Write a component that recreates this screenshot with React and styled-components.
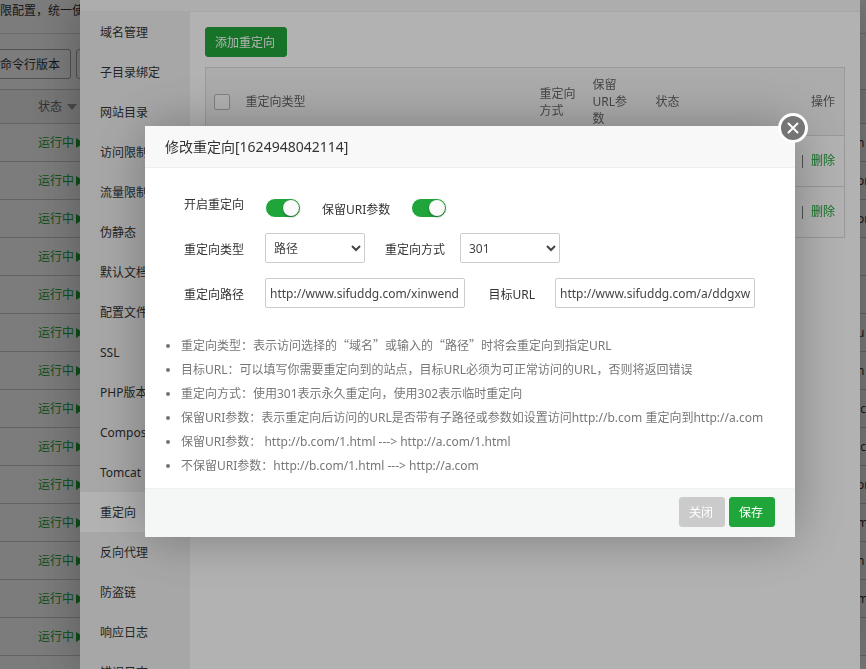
import { useState } from 'react'
import styled, { createGlobalStyle } from 'styled-components'

const menu = [
  '域名管理', '子目录绑定', '网站目录', '访问限制', '流量限制', '伪静态',
  '默认文档', '配置文件', 'SSL', 'PHP版本', 'Composer', 'Tomcat', '重定向',
  '反向代理', '防盗链', '响应日志', '错误日志',
]

const siteNotes = ['n', 'or', 'or', '', '', 'u', 'n', '.c', '.c', 'or', 'm', 'n', 'm', '']

const tips = [
  <>重定向类型：表示访问选择的<Quoted>“域名”</Quoted>或输入的<Quoted>“路径”</Quoted>时将会重定向到指定URL</>,
  '目标URL：可以填写你需要重定向到的站点，目标URL必须为可正常访问的URL，否则将返回错误',
  '重定向方式：使用301表示永久重定向，使用302表示临时重定向',
  '保留URI参数：表示重定向后访问的URL是否带有子路径或参数如设置访问http://b.com 重定向到http://a.com',
  '保留URI参数： http://b.com/1.html ---> http://a.com/1.html',
  '不保留URI参数：http://b.com/1.html ---> http://a.com',
]

function Quoted({ children }) {
  return <QuotedText lang="zh-CN">{children}</QuotedText>
}

const SitePage = () => (
  <Page>
    <Notice>限配置，统一使</Notice>
    <Toolbar>
      <CliButton type="button">命令行版本</CliButton>
      <NextButton type="button" aria-label="更多" />
    </Toolbar>
    <SiteTable>
      <thead>
        <tr>
          <StatusHead>状态<SortArrow viewBox="0 0 10 6"><path d="M0 0h10L5 6z" /></SortArrow></StatusHead>
          <NoteHead />
        </tr>
      </thead>
      <tbody>
        {siteNotes.map((note, i) => (
          <tr key={i}>
            <StatusCell>
              <RunLink href="#">
                运行中<PlayIcon viewBox="0 0 8 10"><path d="M0 0l8 5-8 5z" /></PlayIcon>
              </RunLink>
            </StatusCell>
            <NoteCell>{note}</NoteCell>
          </tr>
        ))}
      </tbody>
    </SiteTable>
  </Page>
)

const SiteDialog = () => (
  <SiteWindow>
    <SiteTitle />
    <SiteBody>
      <Sidebar>
        {menu.map((name) => (
          <MenuItem key={name} href="#" $active={name === '重定向'}>{name}</MenuItem>
        ))}
      </Sidebar>
      <Content>
        <Button type="button">添加重定向</Button>
        <RuleTable>
          <colgroup>
            <col width="31" />
            <col />
            <col width="53" />
            <col width="63" />
            <col width="70" />
            <col width="128" />
          </colgroup>
          <thead>
            <tr>
              <CheckHead><Checkbox type="checkbox" aria-label="全选" /></CheckHead>
              <th>重定向类型</th>
              <th>重定向方式</th>
              <th>保留URL参数</th>
              <th>状态</th>
              <ActionHead>操作</ActionHead>
            </tr>
          </thead>
          <tbody>
            {[1, 2].map((id) => (
              <tr key={id}>
                <td colSpan={5} />
                <ActionCell><Divider>|</Divider><a href="#">删除</a></ActionCell>
              </tr>
            ))}
          </tbody>
        </RuleTable>
      </Content>
    </SiteBody>
  </SiteWindow>
)

const RedirectDialog = () => {
  const [open, setOpen] = useState(true)
  const [keepUri, setKeepUri] = useState(true)
  const [path, setPath] = useState('http://www.sifuddg.com/xinwend')
  const [target, setTarget] = useState('http://www.sifuddg.com/a/ddgxw')

  return (
    <Dialog role="dialog" aria-labelledby="redirect-title">
      <DialogTitle id="redirect-title">修改重定向[1624948042114]</DialogTitle>
      <CloseButton type="button" aria-label="关闭">
        <svg width="12" height="12" viewBox="0 0 12 12">
          <path d="M1.5 1.5l9 9M10.5 1.5l-9 9" stroke="#fff" strokeWidth="2" strokeLinecap="round" />
        </svg>
      </CloseButton>
      <Form>
        <SwitchLine>
          <Label htmlFor="open">开启重定向</Label>
          <SwitchGroup>
            <Switch id="open" type="checkbox" checked={open} onChange={(e) => setOpen(e.target.checked)} />
            <SwitchLabel htmlFor="keep">保留URI参数</SwitchLabel>
            <Switch id="keep" type="checkbox" checked={keepUri} onChange={(e) => setKeepUri(e.target.checked)} />
          </SwitchGroup>
        </SwitchLine>
        <Line>
          <Label htmlFor="type">重定向类型</Label>
          <Select id="type" defaultValue="path">
            <option value="domain">域名</option>
            <option value="path">路径</option>
          </Select>
          <InnerLabel htmlFor="method" $width={95} $gap={15}>重定向方式</InnerLabel>
          <Select id="method" defaultValue="301">
            <option>301</option>
            <option>302</option>
          </Select>
        </Line>
        <Line>
          <Label htmlFor="path">重定向路径</Label>
          <Input id="path" value={path} onChange={(e) => setPath(e.target.value)} />
          <InnerLabel htmlFor="target" $width={90} $gap={20}>目标URL</InnerLabel>
          <Input id="target" value={target} onChange={(e) => setTarget(e.target.value)} />
        </Line>
      </Form>
      <Tips>
        {tips.map((tip, i) => <li key={i}>{tip}</li>)}
      </Tips>
      <Footer>
        <Button type="button" $muted>关闭</Button>
        <Button type="button">保存</Button>
      </Footer>
    </Dialog>
  )
}

const App = () => (
  <>
    <GlobalStyle />
    <SitePage />
    <Shade>
      <SiteDialog />
    </Shade>
    <Shade $top={126}>
      <RedirectDialog />
    </Shade>
  </>
)

export default App

const GlobalStyle = createGlobalStyle`
  * {
    box-sizing: border-box;
  }
  body {
    margin: 0;
    overflow: hidden;
    background: #fff;
    color: #333;
    font-family: "Noto Sans", "Noto Sans CJK SC", sans-serif;
    font-size: 12px;
    line-height: 18px;
  }
  button, input, select {
    font: inherit;
    color: inherit;
  }
  a {
    text-decoration: none;
  }
`

const Page = styled.div`
  height: 100vh;
  overflow: hidden;
`

const Notice = styled.div`
  height: 34px;
  padding-top: 2px;
  border-bottom: 1px solid #ddd;
`

const Toolbar = styled.div`
  display: flex;
  gap: 5px;
  padding: 15px 0 10px;
`

const CliButton = styled.button`
  height: 30px;
  padding: 2px 10px 0 0;
  border: 1px solid #aaa;
  border-left: 0;
  border-radius: 0 3px 3px 0;
  background: transparent;
`

const NextButton = styled.button`
  width: 60px;
  height: 30px;
  border: 1px solid #aaa;
  border-radius: 3px;
  background: transparent;
`

const SiteTable = styled.table`
  width: 100%;
  table-layout: fixed;
  border-collapse: collapse;
  border-top: 1px solid #ccc;

  th, td {
    height: 38px;
    border-bottom: 1px solid #ccc;
    font-weight: 400;
    text-align: left;
    white-space: nowrap;
    overflow: hidden;
  }
  th {
    height: 34px;
    background: #f6f6f6;
    color: #666;
  }
`

const StatusHead = styled.th`
  padding: 0 0 0 38px;
`

const NoteHead = styled.th`
  width: 6px;
  padding: 0;
`

const StatusCell = styled.td`
  padding: 0 0 0 38px;
`

const NoteCell = styled.td`
  padding: 0;
  text-indent: -3px;
`

const SortArrow = styled.svg`
  width: 10px;
  height: 6px;
  margin-left: 5px;
  vertical-align: middle;
  fill: #999;
`

const RunLink = styled.a`
  color: #20a53a;
`

const PlayIcon = styled.svg`
  width: 8px;
  height: 10px;
  margin-left: 2px;
  vertical-align: middle;
  fill: currentColor;
`

const Shade = styled.div`
  position: fixed;
  inset: 0;
  display: flex;
  justify-content: center;
  align-items: flex-start;
  padding: ${({ $top = 0 }) => $top}px 6px 0 80px;
  background: rgba(0, 0, 0, 0.3);
`

const SiteWindow = styled.div`
  display: flex;
  flex: 1;
  flex-direction: column;
  height: 100%;
  background: #fff;
  box-shadow: 1px 1px 50px rgba(0, 0, 0, 0.3);
`

const SiteTitle = styled.div`
  flex: none;
  height: 12px;
  border-bottom: 1px solid #eee;
  background: #f8f8f8;
`

const SiteBody = styled.div`
  display: flex;
  flex: 1;
  min-height: 0;
`

const Sidebar = styled.nav`
  flex: none;
  width: 110px;
  background: #f0f0f1;
  overflow: hidden;
`

const MenuItem = styled.a`
  display: block;
  height: 40px;
  padding-left: 20px;
  line-height: 42px;
  background: ${({ $active }) => ($active ? '#fff' : 'transparent')};
  color: #333;
`

const Content = styled.div`
  flex: 1;
  padding: 15px 15px 0;
`

const Button = styled.button`
  display: block;
  height: 30px;
  padding: 2px 11px 0 9px;
  border: 1px solid ${({ $muted }) => ($muted ? '#cbcbcb' : '#20a53a')};
  border-radius: 3px;
  background: ${({ $muted }) => ($muted ? '#cbcbcb' : '#20a53a')};
  color: #fff;
`

const RuleTable = styled.table`
  width: 100%;
  margin-top: 10px;
  table-layout: fixed;
  border-collapse: collapse;
  border: 1px solid #ddd;

  th {
    height: 68px;
    padding: 0 8px 0 9px;
    background: #f6f6f6;
    color: #666;
    font-weight: 400;
    line-height: 17px;
    text-align: left;
  }
  td {
    height: 51px;
    padding: 0 9px;
    border-top: 1px solid #ddd;
  }
  a {
    color: #20a53a;
  }
`

const CheckHead = styled.th`
  &&& {
    padding: 0 0 0 8px;
  }
`

const ActionHead = styled.th`
  &&& {
    padding-right: 9px;
    text-align: right;
  }
`

const ActionCell = styled.td`
  text-align: right;
`

const Checkbox = styled.input`
  display: block;
  width: 16px;
  height: 16px;
  margin: 0;
  appearance: none;
  border: 1px solid #bbb;
  border-radius: 2px;
  background: #fff;
`

const Divider = styled.span`
  margin-right: 5px;
  color: #666;
`

const Dialog = styled.div`
  position: relative;
  width: 650px;
  background: #fff;
  box-shadow: 1px 1px 50px rgba(0, 0, 0, 0.3);
`

const DialogTitle = styled.h2`
  height: 42px;
  margin: 0;
  padding-left: 20px;
  border-bottom: 1px solid #eee;
  background: #f8f8f8;
  font-size: 14px;
  font-weight: 400;
  line-height: 42px;
`

const CloseButton = styled.button`
  position: absolute;
  top: -13px;
  right: -13px;
  display: flex;
  align-items: center;
  justify-content: center;
  width: 30px;
  height: 30px;
  padding: 0;
  border: 3px solid #fff;
  border-radius: 50%;
  background: #757575;
`

const Form = styled.div`
  display: flex;
  flex-direction: column;
  gap: 15px;
  padding: 20px 0 26px;
`

const Line = styled.div`
  display: flex;
  align-items: center;
  height: 30px;
`

const Label = styled.label`
  width: 120px;
  padding: 4px 21px 0 0;
  line-height: 32px;
  text-align: right;
`

const InnerLabel = styled(Label)`
  width: ${({ $width }) => $width}px;
  padding-right: ${({ $gap }) => $gap}px;
`

const SwitchLine = styled(Line)`
  align-items: flex-start;

  & > label {
    padding-top: 1px;
  }
`

const SwitchGroup = styled.div`
  display: flex;
  align-items: center;
  height: 40px;
`

const SwitchLabel = styled.label`
  margin: 0 21px;
  padding-top: 4px;
`

const Switch = styled.input`
  display: flex;
  width: 36px;
  height: 20px;
  margin: 0;
  padding: 1px;
  appearance: none;
  border: 1px solid #fff;
  border-radius: 10px;
  background: #ddd;

  &::before {
    content: "";
    width: 16px;
    height: 16px;
    border-radius: 50%;
    background: #fafafa;
    box-shadow: 0 1px 2px rgba(0, 0, 0, 0.4);
  }
  &:checked {
    justify-content: flex-end;
    background: #20a53a;
  }
`

const Select = styled.select`
  width: 100px;
  height: 30px;
  padding: 0 0 0 4px;
  border: 1px solid #ccc;
  border-radius: 2px;
  background: #fff;
  color: #444;
`

const Input = styled.input`
  width: 200px;
  height: 30px;
  padding: 0 2px 0 4px;
  border: 1px solid #ccc;
  border-radius: 2px;
  background: #fff;
  color: #444;
`

const Tips = styled.ul`
  margin: 0;
  padding: 0 0 10px 36px;
  color: #777;
  line-height: 24px;
`

const QuotedText = styled.span`
  font-family: "Noto Sans CJK SC", sans-serif;
  line-height: 1;
`

const Footer = styled.div`
  display: flex;
  justify-content: flex-end;
  gap: 4px;
  padding: 8px 20px 10px;
  border-top: 1px solid #edf1f0;
  background: #f5f7f7;
`
